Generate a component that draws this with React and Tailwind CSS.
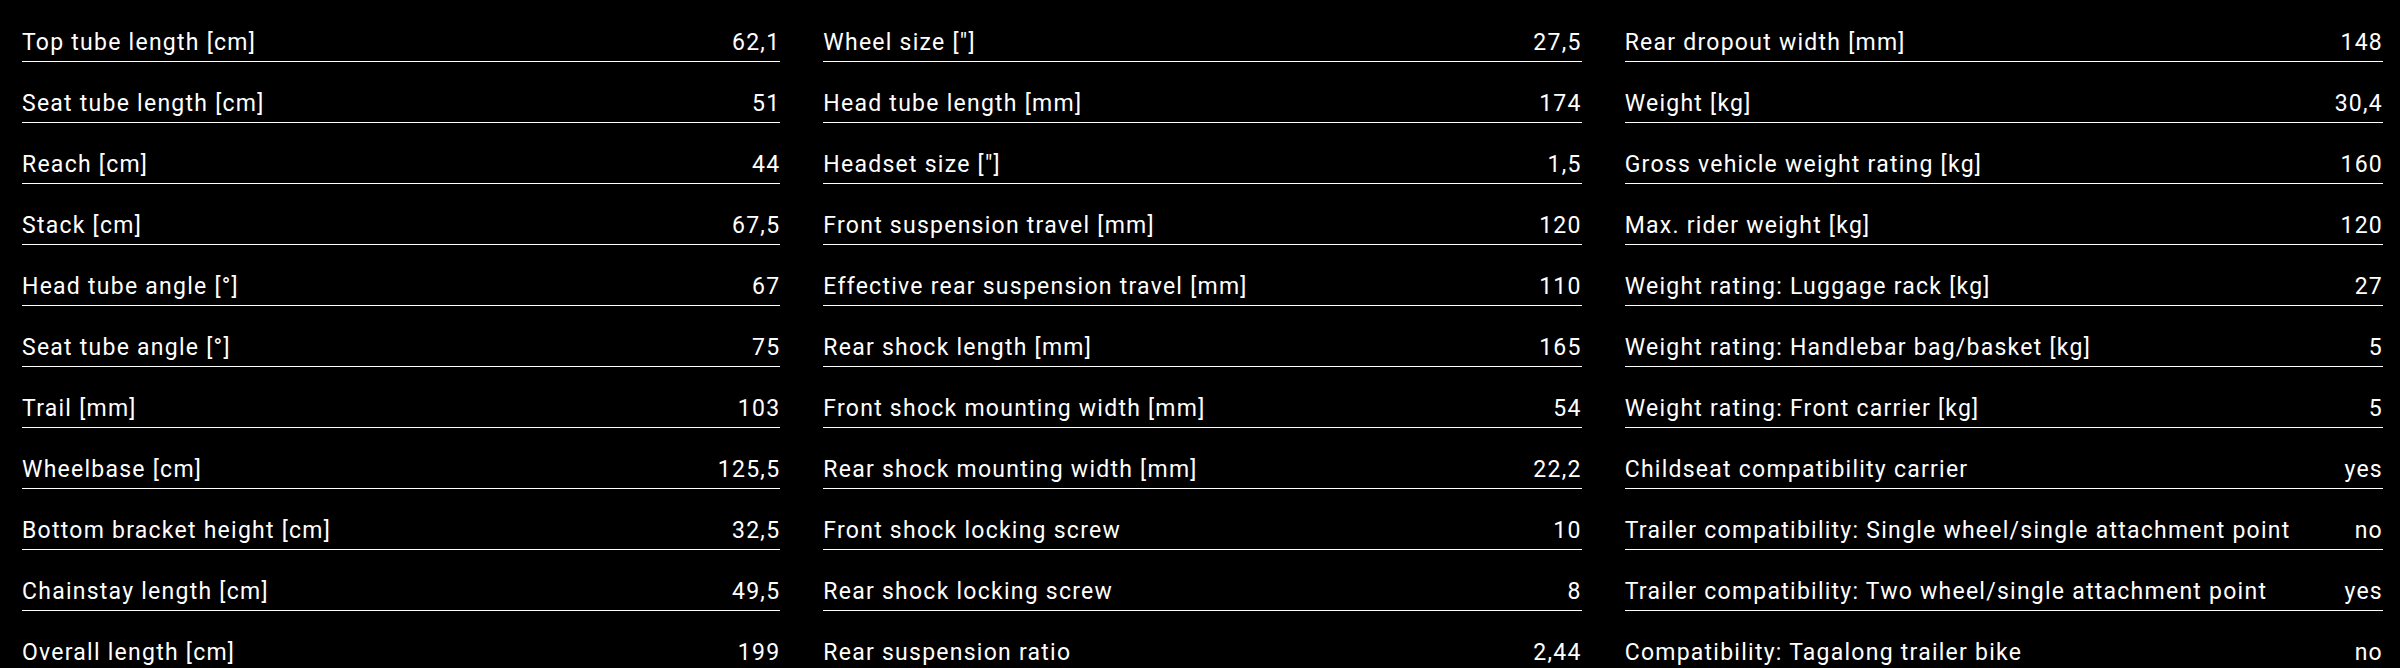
const columns = [
  [
    ["Top tube length [cm]", "62,1"],
    ["Seat tube length [cm]", "51"],
    ["Reach [cm]", "44"],
    ["Stack [cm]", "67,5"],
    ["Head tube angle [°]", "67"],
    ["Seat tube angle [°]", "75"],
    ["Trail [mm]", "103"],
    ["Wheelbase [cm]", "125,5"],
    ["Bottom bracket height [cm]", "32,5"],
    ["Chainstay length [cm]", "49,5"],
    ["Overall length [cm]", "199"],
  ],
  [
    ['Wheel size ["]', "27,5"],
    ["Head tube length [mm]", "174"],
    ['Headset size ["]', "1,5"],
    ["Front suspension travel [mm]", "120"],
    ["Effective rear suspension travel [mm]", "110"],
    ["Rear shock length [mm]", "165"],
    ["Front shock mounting width [mm]", "54"],
    ["Rear shock mounting width [mm]", "22,2"],
    ["Front shock locking screw", "10"],
    ["Rear shock locking screw", "8"],
    ["Rear suspension ratio", "2,44"],
  ],
  [
    ["Rear dropout width [mm]", "148"],
    ["Weight [kg]", "30,4"],
    ["Gross vehicle weight rating [kg]", "160"],
    ["Max. rider weight [kg]", "120"],
    ["Weight rating: Luggage rack [kg]", "27"],
    ["Weight rating: Handlebar bag/basket [kg]", "5"],
    ["Weight rating: Front carrier [kg]", "5"],
    ["Childseat compatibility carrier", "yes"],
    ["Trailer compatibility: Single wheel/single attachment point", "no"],
    ["Trailer compatibility: Two wheel/single attachment point", "yes"],
    ["Compatibility: Tagalong trailer bike", "no"],
  ],
];

function SpecRow({ label, value }) {
  return (
    <div className="flex h-[61px] items-end justify-between gap-6 border-b border-white pb-[6px]">
      <span className="leading-[24px]">{label}</span>
      <span className="leading-[24px]">{value}</span>
    </div>
  );
}

function App() {
  return (
    <div className="h-[668px] overflow-hidden bg-black pt-px pl-[22px] pr-[17px] font-['Roboto',sans-serif] text-[23px] tracking-[1.25px] text-white">
      <div className="grid grid-cols-3 gap-x-[43px]">
        {columns.map((col, i) => (
          <div key={i} className="flex flex-col">
            {col.map(([label, value]) => (
              <SpecRow key={label} label={label} value={value} />
            ))}
          </div>
        ))}
      </div>
    </div>
  );
}

export default App;
